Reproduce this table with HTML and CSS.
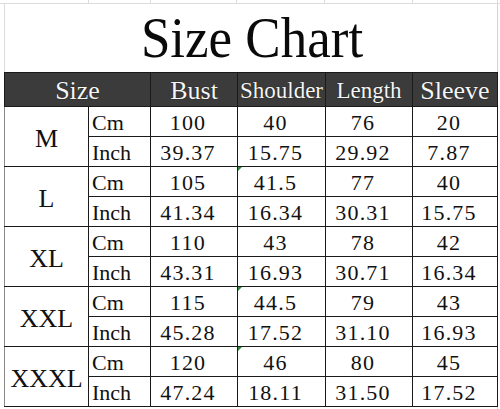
FILE: index.html
```html
<!DOCTYPE html>
<html>
<head>
<meta charset="utf-8">
<link rel="stylesheet" href="styles.css">
</head>
<body>
<div class="grid-top">
  <span class="gc gc0"></span><span class="gc gc1"></span><span class="gc gc2"></span><span class="gc gc3"></span><span class="gc gc4"></span><span class="gc gc5"></span><span class="gc gc6"></span>
</div>
<div class="sheet">
  <div class="title"><span class="title-text">Size Chart</span></div>
  <table class="chart">
    <colgroup>
      <col class="c-size"><col class="c-unit"><col class="c-bust"><col class="c-shoulder"><col class="c-length"><col class="c-sleeve">
    </colgroup>
    <thead>
      <tr>
        <th colspan="2" class="h-big">Size</th>
        <th class="h-big">Bust</th>
        <th class="h-small">Shoulder</th>
        <th class="h-small">Length</th>
        <th class="h-big">Sleeve</th>
      </tr>
    </thead>
    <tbody>
      <tr><td rowspan="2" class="sz">M</td><td class="unit">Cm</td><td class="num">100</td><td class="num">40</td><td class="num">76</td><td class="num">20</td></tr>
      <tr><td class="unit">Inch</td><td class="num">39.37</td><td class="num">15.75</td><td class="num">29.92</td><td class="num">7.87</td></tr>
      <tr><td rowspan="2" class="sz">L</td><td class="unit">Cm</td><td class="num">105</td><td class="num mark">41.5</td><td class="num">77</td><td class="num">40</td></tr>
      <tr><td class="unit">Inch</td><td class="num">41.34</td><td class="num">16.34</td><td class="num">30.31</td><td class="num">15.75</td></tr>
      <tr><td rowspan="2" class="sz">XL</td><td class="unit">Cm</td><td class="num">110</td><td class="num">43</td><td class="num">78</td><td class="num">42</td></tr>
      <tr><td class="unit">Inch</td><td class="num">43.31</td><td class="num">16.93</td><td class="num">30.71</td><td class="num">16.34</td></tr>
      <tr><td rowspan="2" class="sz">XXL</td><td class="unit">Cm</td><td class="num">115</td><td class="num mark">44.5</td><td class="num">79</td><td class="num">43</td></tr>
      <tr><td class="unit">Inch</td><td class="num">45.28</td><td class="num">17.52</td><td class="num">31.10</td><td class="num">16.93</td></tr>
      <tr><td rowspan="2" class="sz">XXXL</td><td class="unit">Cm</td><td class="num">120</td><td class="num mark">46</td><td class="num">80</td><td class="num">45</td></tr>
      <tr><td class="unit">Inch</td><td class="num">47.24</td><td class="num">18.11</td><td class="num">31.50</td><td class="num">17.52</td></tr>
    </tbody>
  </table>
</div>
</body>
</html>
```
FILE: styles.css
```css
html, body {
  margin: 0;
  padding: 0;
  background: #ffffff;
}
body {
  font-family: "Liberation Serif", "Times New Roman", serif;
  color: #111111;
  width: 500px;
  height: 409px;
  overflow: hidden;
}
.grid-top {
  display: flex;
  height: 3px;
  border-bottom: 1px solid #dcdcdc;
}
.gc {
  display: block;
  height: 3px;
  border-right: 1px solid #dcdcdc;
  box-sizing: border-box;
}
.gc0 { width: 89px; }
.gc1 { width: 62px; }
.gc2 { width: 86px; }
.gc3 { width: 88px; }
.gc4 { width: 88px; }
.gc5 { width: 85px; }
.gc6 { width: 0; border-right: none; }

.sheet {
  margin-left: 4px;
  width: 493px;
  border-right: 1px solid #d2d2d2;
  height: 405px;
}
.title {
  height: 68px;
  border-left: 1px solid #dcdcdc;
  box-sizing: border-box;
  text-align: center;
  line-height: 64px;
  padding-top: 3px;
}
.title-text {
  display: inline-block;
  font-size: 53px;
  color: #0a0a0a;
  transform: scaleY(1.08);
  transform-origin: 50% 80%;
  padding-left: 2px;
}
.chart {
  border-collapse: collapse;
  table-layout: fixed;
  width: 493px;
}
.c-size { width: 84px; }
.c-unit { width: 62px; }
.c-bust { width: 87px; }
.c-shoulder { width: 88px; }
.c-length { width: 87px; }
.c-sleeve { width: 85px; }

.chart th, .chart td {
  border: 1px solid #1a1a1a;
  padding: 0;
  white-space: nowrap;
  overflow: visible;
}
.chart th {
  background: #3b3b3b;
  color: #f6f6f6;
  font-weight: normal;
  height: 34px;
  padding-top: 3px;
  box-sizing: border-box;
  text-align: center;
  text-shadow: 0 0 1px #000;
}
.h-big { font-size: 26px; }
.h-small { font-size: 23px; }
.chart td {
  height: 30px;
  box-sizing: border-box;
  font-size: 22px;
  padding-top: 3px;
}
.chart tbody tr:first-child td { border-top-color: #1a1a1a; }
.chart td:first-child { border-left-color: #8a8a8a; }
.chart tbody tr:nth-child(even) td:first-child { border-left-color: #1a1a1a; }
.chart td.sz {
  font-size: 26px;
  text-align: center;
  padding-top: 4px;
  border-left-color: #8a8a8a;
}
.chart td.unit {
  padding-left: 3px;
  text-align: left;
}
.chart td.num {
  text-align: center;
  letter-spacing: 1.2px;
  padding-right: 12px;
}
.chart td.mark { position: relative; }
.chart td.mark::before {
  content: "";
  position: absolute;
  left: 0;
  top: 0;
  border-top: 4px solid #2e8b3e;
  border-right: 4px solid transparent;
}
```
